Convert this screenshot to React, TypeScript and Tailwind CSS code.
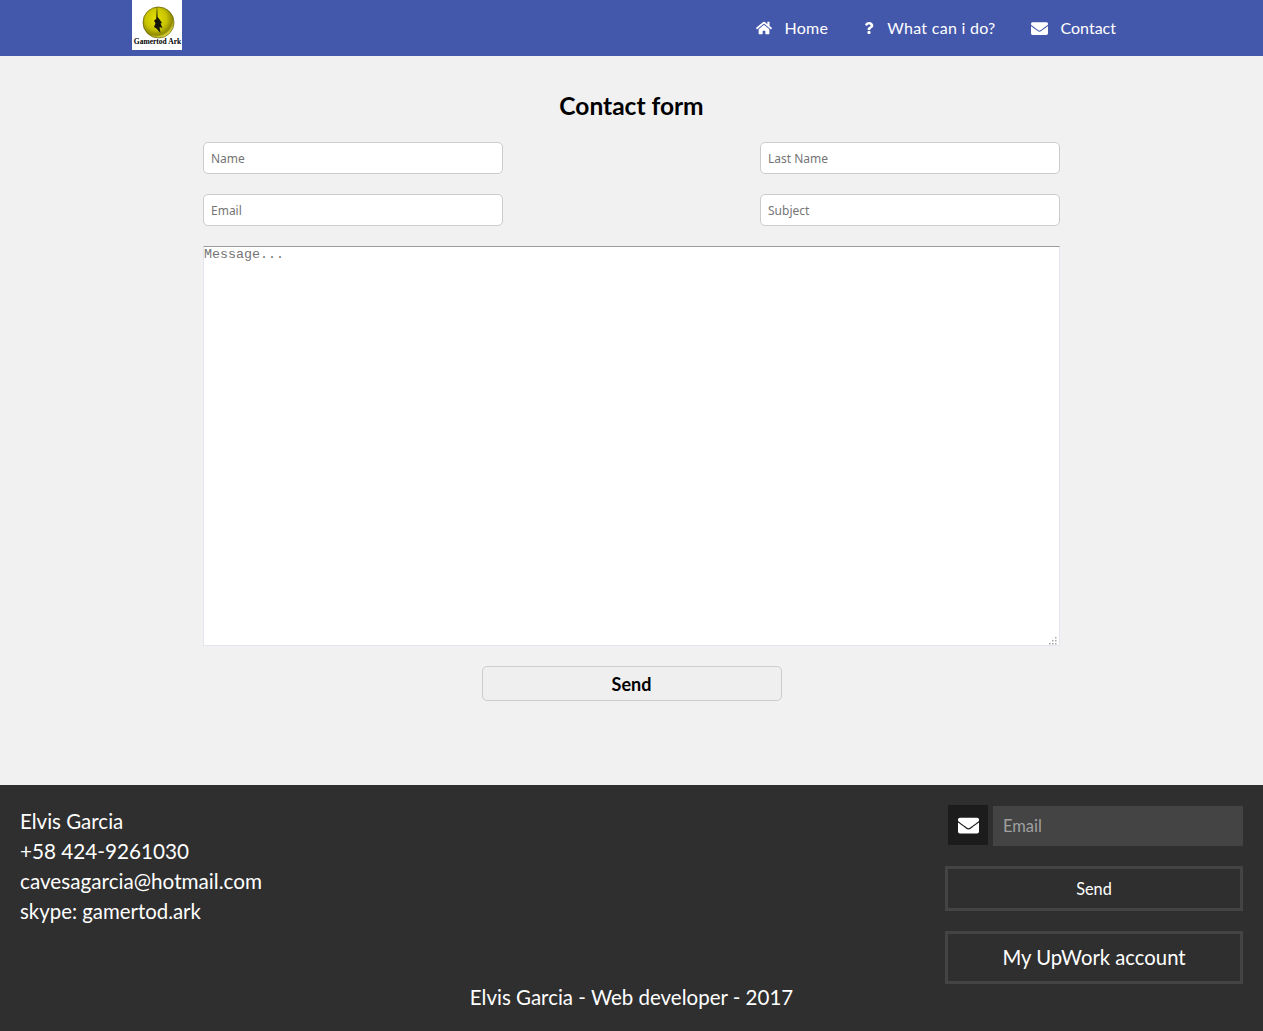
import { FaHome, FaQuestion, FaEnvelope } from "react-icons/fa";

const Logo = () => (
  <div className="w-[50px] h-[50px] bg-white flex flex-col items-center overflow-hidden">
    <svg width="36" height="36" viewBox="0 0 36 36" className="mt-[4px] ml-[3px] shrink-0">
      <defs>
        <radialGradient id="g" cx="42%" cy="38%" r="62%">
          <stop offset="0%" stopColor="#e6e000" />
          <stop offset="55%" stopColor="#c9c400" />
          <stop offset="85%" stopColor="#8f8a00" />
          <stop offset="100%" stopColor="#e8e34a" />
        </radialGradient>
      </defs>
      <circle cx="17.5" cy="18.5" r="15.5" fill="url(#g)" stroke="#5c5800" strokeWidth="0.7" />
      <path d="M16 1.5 L16.6 13 L19 16 L21 19 L19.5 19.5 L21.5 24 L18.5 23 L19.5 29 L15.5 24.5 L13 23 L14.5 19.5 L13 16.5 L15.2 15 Z" fill="#141408" />
    </svg>
    <span className="font-['Liberation_Serif',serif] font-bold text-[7.5px] leading-[8px] text-black whitespace-nowrap -mt-[2px] ml-[1px]">Gamertod Ark</span>
  </div>
);

const fieldCls =
  "w-[300px] h-8 bg-white border border-[#cccccc] rounded-[5px] px-[7px] text-[12px] font-['Noto_Sans',sans-serif] placeholder:text-[#757575] outline-none";

const dots: [number, number][] = [
  [6, 0],
  [3, 3],
  [6, 3],
  [0, 6],
  [3, 6],
  [6, 6],
];

export default function App() {
  return (
    <div className="min-h-[1031px] flex flex-col bg-[#f1f1f1] font-['Lato','Noto_Sans',sans-serif]">
      <header className="h-14 bg-[#4458ab] flex items-start justify-between pl-[132px] pr-[147px]">
        <Logo />
        <nav className="flex items-center h-14 gap-[35px] text-white text-[16px] leading-6">
          <a className="flex items-center gap-[13px]">
            <FaHome className="w-[16px] h-[16px]" />
            <span className="tracking-[0.25px]">Home</span>
          </a>
          <a className="flex items-center gap-[13px]">
            <FaQuestion className="w-[10px] h-[12px] ml-[1px]" />
            <span className="tracking-[0.28px]">What can i do?</span>
          </a>
          <a className="flex items-center gap-[13px]">
            <FaEnvelope className="w-[17px] h-[17px]" />
            <span>Contact</span>
          </a>
        </nav>
      </header>

      <main className="flex-1 flex flex-col items-center pt-[34px]">
        <h1 className="text-[24.5px] leading-8 font-bold text-black">Contact form</h1>
        <form className="w-[857px] mt-[20px] flex flex-col gap-5">
          <div className="flex justify-between">
            <input className={fieldCls} placeholder="Name" />
            <input className={fieldCls} placeholder="Last Name" />
          </div>
          <div className="flex justify-between">
            <input className={fieldCls} placeholder="Email" />
            <input className={fieldCls} placeholder="Subject" />
          </div>
          <div className="relative">
            <textarea
              className="w-full h-[400px] resize-none bg-white border border-[#e3e6ee] border-t-[#9b9b9f] text-[13.33px] leading-[15px] font-['Liberation_Mono',monospace] placeholder:text-[#757575] outline-none block"
              placeholder="Message..."
            />
            <svg width="8" height="8" viewBox="0 0 8 8" className="absolute right-[3px] bottom-[1px]">
              {dots.map(([x, y]) => (
                <rect key={`${x}-${y}`} x={x} y={y} width="1.5" height="1.5" fill="#a8a8a8" />
              ))}
            </svg>
          </div>
          <button
            type="button"
            className="self-center w-[300px] h-[35px] pt-[1px] bg-[#efefef] border border-[#cccccc] rounded-[5px] font-bold text-[18px] text-black"
          >
            Send
          </button>
        </form>
      </main>

      <footer className="h-[246px] bg-[#2f2f2f] text-white relative flex justify-between pl-5 pr-5 pt-5">
        <div className="text-[20.5px] leading-[30px] pt-[1px]">
          <p>Elvis Garcia</p>
          <p className="text-[20.7px]">+58 424-9261030</p>
          <p className="text-[20.7px]">cavesagarcia@hotmail.com</p>
          <p className="text-[20.4px]">skype: gamertod.ark</p>
        </div>
        <div className="w-[298px] flex flex-col">
          <div className="flex items-start pl-[3px]">
            <span className="w-10 h-10 bg-[#1c1c1c] flex items-center justify-center">
              <FaEnvelope className="w-[21px] h-[21px] text-white" />
            </span>
            <input
              className="ml-[5px] mt-[1px] w-[250px] h-10 pb-[1px] bg-[#444444] px-[10px] text-[16.5px] text-white placeholder:text-[#a0a0a0] outline-none"
              placeholder="Email"
            />
          </div>
          <button type="button" className="mt-[20px] h-[45px] pt-[1px] border-[3px] border-[#444444] text-[16.3px] text-white">Send</button>
          <button type="button" className="mt-[20px] h-[53px] border-[3px] border-[#444444] text-[20.3px] text-white">My UpWork account</button>
        </div>
        <p className="absolute left-0 right-0 top-[198px] text-center text-[20.5px] leading-7">Elvis Garcia - Web developer - 2017</p>
      </footer>
    </div>
  );
}
